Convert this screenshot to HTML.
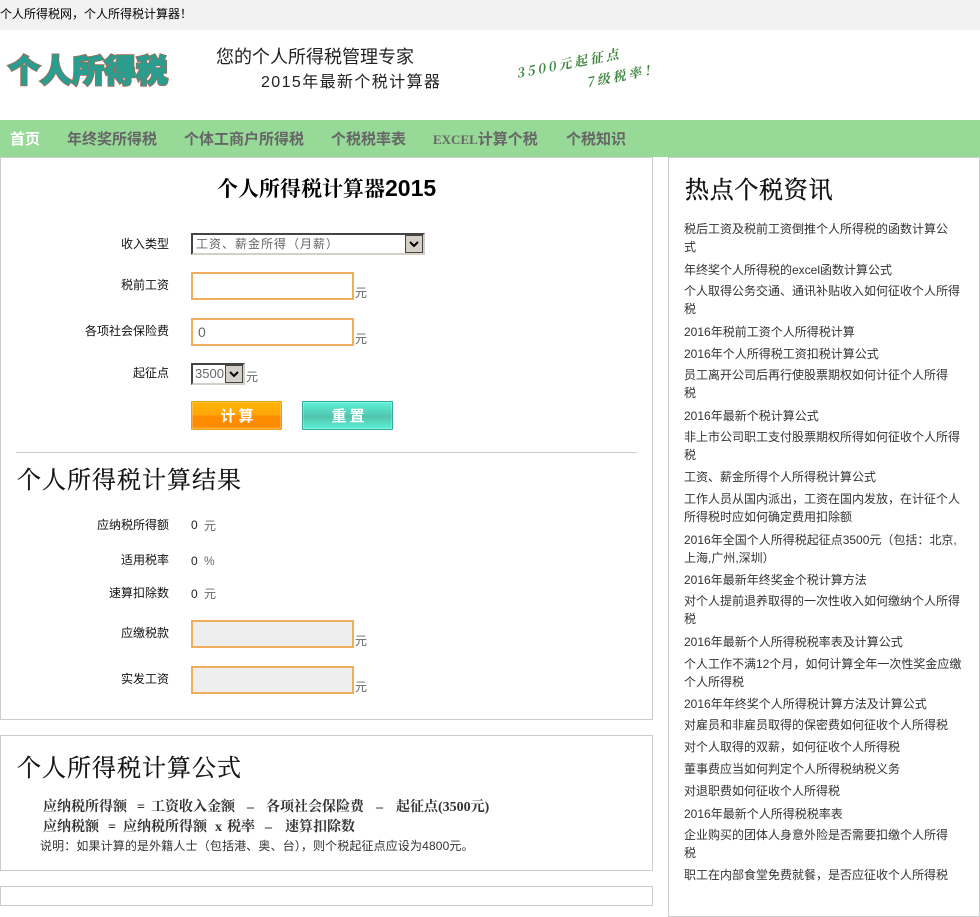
<!DOCTYPE html>
<html lang="zh-CN"><head><meta charset="utf-8"><title>个人所得税计算器</title>
<style>
html,body{margin:0;padding:0;background:#fff}
body{width:980px;height:891px;position:relative;overflow:hidden;font:12px/18px "Liberation Sans","Noto Sans CJK SC",sans-serif;color:#333}
.a{position:absolute;white-space:nowrap}
.box{position:absolute;border:1px solid #ccc;box-sizing:border-box;background:#fff}
.serif{font-family:"Liberation Serif","Noto Serif CJK SC",serif;color:#111;-webkit-text-stroke:.25px #111}
.lab{position:absolute;width:120px;left:49px;text-align:right;color:#111;white-space:nowrap}
.inp{position:absolute;left:191px;width:163px;height:28px;box-sizing:border-box;border:2px solid #f0ad5a;background:#fff;color:#666;font-size:14px;line-height:24px;padding-left:5px}
.gr{background:#eee}
.u{position:absolute;color:#666}
.nav{position:absolute;top:130px;font-size:15px;line-height:20px;font-weight:bold;color:#666;white-space:nowrap}
.sel{position:absolute;box-sizing:border-box;border:2px solid;border-color:#444 #d4d0c8 #d4d0c8 #444;background:#fff;color:#666}
.arr{position:absolute;right:0;top:0;width:18px;height:18px;box-sizing:border-box;background:#d4d0c8;border:1px solid #444}
.btn{position:absolute;top:401px;width:91px;height:29px;box-sizing:border-box;color:#fff;font-weight:bold;font-size:15px;line-height:29px;text-align:center;letter-spacing:3px;padding-left:4px;border-radius:1px;box-shadow:inset 0 0 0 1px rgba(255,255,255,.22)}
.l{position:absolute;left:684px;color:#333;white-space:nowrap}
.f{position:absolute;font:bold 14px/18px "Liberation Serif","Noto Serif CJK SC",serif;color:#333;white-space:nowrap}
.logo{position:absolute;left:8px;top:49px;font:900 32px/40px "Noto Sans CJK SC",sans-serif;white-space:nowrap}
.g{position:absolute;font:italic bold 13px/18px "Noto Serif CJK SC",serif;color:#3f863f;letter-spacing:3px;white-space:nowrap;transform-origin:0 100%;transform:rotate(-11deg)}
</style></head><body>
<div class="a" style="left:0;top:0;width:980px;height:30px;background:#f2f2f2"></div>
<div class="a" style="left:0;top:5px;color:#000">个人所得税网，个人所得税计算器！</div>

<div class="logo" style="color:#b5654f;-webkit-text-stroke:2.4px #b5654f" aria-hidden="true">个人所得税</div>
<div class="logo" style="color:#2a9d8f;-webkit-text-stroke:1px #2a9d8f">个人所得税</div>
<div class="a" style="left:216px;top:46px;font-size:18px;line-height:22px;color:#222">您的个人所得税管理专家</div>
<div class="a" style="left:261px;top:72px;font-size:16px;line-height:22px;letter-spacing:1.4px;color:#222">2015年最新个税计算器</div>
<div class="g" style="left:518px;top:64px">3500元起征点</div>
<div class="g" style="left:588px;top:73px">7级税率！</div>

<div class="a" style="left:0;top:120px;width:980px;height:37px;background:#97d997"></div>
<div class="nav" style="left:10px;color:#fff">首页</div>
<div class="nav" style="left:67px">年终奖所得税</div>
<div class="nav" style="left:184px">个体工商户所得税</div>
<div class="nav" style="left:331px">个税税率表</div>
<div class="nav" style="left:433px"><span style="font:bold 13px/20px 'Liberation Serif',serif">EXCEL</span>计算个税</div>
<div class="nav" style="left:566px">个税知识</div>

<div class="box" style="left:0;top:157px;width:653px;height:563px"></div>
<div class="a" style="left:217px;top:174px;font-size:21px;line-height:28px;color:#000;font-weight:bold;font-family:'Liberation Sans','Noto Serif CJK SC',serif">个人所得税计算器<span style="font-size:23px">2015</span></div>

<div class="lab" style="top:235px">收入类型</div>
<div class="sel" style="left:191px;top:233px;width:234px;height:22px;font-size:12px;line-height:18px;padding-left:3px;letter-spacing:1px">工资、薪金所得（月薪）
<div class="arr"><svg width="16" height="16" viewBox="0 0 16 16" style="display:block"><path d="M4 6l4 4 4-4" fill="none" stroke="#000" stroke-width="2"/></svg></div></div>

<div class="lab" style="top:276px">税前工资</div>
<div class="inp" style="top:272px"></div><div class="u" style="left:355px;top:284px">元</div>
<div class="lab" style="top:322px">各项社会保险费</div>
<div class="inp" style="top:318px">0</div><div class="u" style="left:355px;top:330px">元</div>
<div class="lab" style="top:364px">起征点</div>
<div class="sel" style="left:191px;top:363px;width:54px;height:22px;font-size:13px;line-height:18px;padding-left:2px">3500
<div class="arr"><svg width="16" height="16" viewBox="0 0 16 16" style="display:block"><path d="M4 6l4 4 4-4" fill="none" stroke="#000" stroke-width="2"/></svg></div></div>
<div class="u" style="left:246px;top:368px">元</div>

<div class="btn" style="left:191px;border:1px solid #e5a00d;background:linear-gradient(#ffb400 0,#ffa80a 45%,#ff8c00 55%,#ff8c00 90%,#ffa320 100%)">计算</div>
<div class="btn" style="left:302px;border:1px solid #35ab98;background:linear-gradient(#5cf2d8 0,#52c4ad 55%,#5cf2d8 100%)">重置</div>

<div class="a" style="left:16px;top:452px;width:621px;height:1px;background:#ccc"></div>
<div class="a serif" style="left:17px;top:465px;font-size:24px;line-height:32px;letter-spacing:1px">个人所得税计算结果</div>

<div class="lab" style="top:516px">应纳税所得额</div><div class="a" style="left:191px;top:516px;font-size:12px;color:#222">0</div><div class="u" style="left:204px;top:517px">元</div>
<div class="lab" style="top:551px">适用税率</div><div class="a" style="left:191px;top:552px;color:#222">0</div><div class="u" style="left:204px;top:552px">%</div>
<div class="lab" style="top:584px">速算扣除数</div><div class="a" style="left:191px;top:585px;color:#222">0</div><div class="u" style="left:204px;top:585px">元</div>
<div class="lab" style="top:624px">应缴税款</div>
<div class="inp gr" style="top:620px"></div><div class="u" style="left:355px;top:632px">元</div>
<div class="lab" style="top:670px">实发工资</div>
<div class="inp gr" style="top:666px"></div><div class="u" style="left:355px;top:678px">元</div>

<div class="box" style="left:0;top:735px;width:653px;height:136px"></div>
<div class="a serif" style="left:17px;top:753px;font-size:24px;line-height:32px;letter-spacing:1px">个人所得税计算公式</div>

<span class="f" style="left:43px;top:799px">应纳税所得额</span>
<span class="f" style="left:137px;top:799px">=</span>
<span class="f" style="left:151px;top:799px">工资收入金额</span>
<span class="f" style="left:247px;top:799px">–</span>
<span class="f" style="left:266px;top:799px">各项社会保险费</span>
<span class="f" style="left:376px;top:799px">–</span>
<span class="f" style="left:396px;top:799px">起征点(3500元)</span>

<span class="f" style="left:43px;top:819px">应纳税额</span>
<span class="f" style="left:108px;top:819px">=</span>
<span class="f" style="left:123px;top:819px">应纳税所得额</span>
<span class="f" style="left:215px;top:819px">x</span>
<span class="f" style="left:227px;top:819px">税率</span>
<span class="f" style="left:265px;top:819px">–</span>
<span class="f" style="left:285px;top:819px">速算扣除数</span>

<div class="a" style="left:40px;top:837px;color:#333;letter-spacing:.13px">说明：如果计算的是外籍人士（包括港、奥、台），则个税起征点应设为4800元。</div>
<div class="box" style="left:0;top:886px;width:653px;height:20px"></div>

<div class="box" style="left:668px;top:157px;width:312px;height:760px"></div>
<div class="a serif" style="left:685px;top:175px;font-size:24px;line-height:32px;letter-spacing:.7px;-webkit-text-stroke:.4px #111">热点个税资讯</div>

<div class="l" style="top:220px">税后工资及税前工资倒推个人所得税的函数计算公<br>式</div>
<div class="l" style="top:261px">年终奖个人所得税的excel函数计算公式</div>
<div class="l" style="top:282px">个人取得公务交通、通讯补贴收入如何征收个人所得<br>税</div>
<div class="l" style="top:323px">2016年税前工资个人所得税计算</div>
<div class="l" style="top:345px">2016年个人所得税工资扣税计算公式</div>
<div class="l" style="top:366px">员工离开公司后再行使股票期权如何计征个人所得<br>税</div>
<div class="l" style="top:407px">2016年最新个税计算公式</div>
<div class="l" style="top:428px">非上市公司职工支付股票期权所得如何征收个人所得<br>税</div>
<div class="l" style="top:468px">工资、薪金所得个人所得税计算公式</div>
<div class="l" style="top:490px">工作人员从国内派出，工资在国内发放，在计征个人<br>所得税时应如何确定费用扣除额</div>
<div class="l" style="top:531px">2016年全国个人所得税起征点3500元（包括：北京,<br>上海,广州,深圳）</div>
<div class="l" style="top:571px">2016年最新年终奖金个税计算方法</div>
<div class="l" style="top:592px">对个人提前退养取得的一次性收入如何缴纳个人所得<br>税</div>
<div class="l" style="top:633px">2016年最新个人所得税税率表及计算公式</div>
<div class="l" style="top:655px">个人工作不满12个月，如何计算全年一次性奖金应缴<br>个人所得税</div>
<div class="l" style="top:695px">2016年年终奖个人所得税计算方法及计算公式</div>
<div class="l" style="top:716px">对雇员和非雇员取得的保密费如何征收个人所得税</div>
<div class="l" style="top:738px">对个人取得的双薪，如何征收个人所得税</div>
<div class="l" style="top:760px">董事费应当如何判定个人所得税纳税义务</div>
<div class="l" style="top:782px">对退职费如何征收个人所得税</div>
<div class="l" style="top:805px">2016年最新个人所得税税率表</div>
<div class="l" style="top:826px">企业购买的团体人身意外险是否需要扣缴个人所得<br>税</div>
<div class="l" style="top:866px">职工在内部食堂免费就餐，是否应征收个人所得税</div>
</body></html>
